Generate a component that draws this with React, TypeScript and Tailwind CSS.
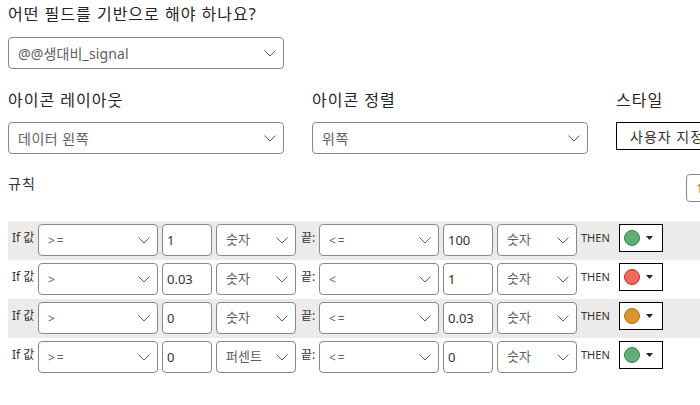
const font = { fontFamily: '"Noto Sans", "Noto Sans CJK KR", sans-serif' };

function Chevron({ className = "" }: { className?: string }) {
  return (
    <svg width="12" height="7" viewBox="0 0 12 7" fill="none" className={className}>
      <path d="M0.5 0.5 L6 6 L11.5 0.5" stroke="#605e5c" strokeWidth="1" />
    </svg>
  );
}

function Select({ value, w, kind = "big" }: { value: string; w: string; kind?: "big" | "mixed" | "unit" | "op" }) {
  const cls =
    kind === "op"
      ? "text-[12px] tracking-[2px] text-[#605e5c] pt-[2px]"
      : kind === "unit"
        ? "text-[13px] text-[#605e5c]"
        : kind === "mixed"
          ? "text-[14px] tracking-[0.15px] text-[#605e5c] pt-[1px]"
          : "text-[14px] tracking-[0.5px] text-[#605e5c] pt-[1px]";
  return (
    <div className={`${w} h-8 shrink-0 flex items-center justify-between pl-[9px] pr-[7px] bg-white border border-[#8a8886] rounded-sm`}>
      <span className={cls}>{value}</span>
      <Chevron />
    </div>
  );
}

function NumInput({ value }: { value: string }) {
  return (
    <div className="w-[50px] h-8 shrink-0 flex items-center px-1 pt-[2px] bg-white border border-[#8a8886] rounded-sm text-[13px] text-[#323130]">
      {value}
    </div>
  );
}

function Rule({ op1, v1, u1, op2, v2, color, edge, shaded }: { op1: string; v1: string; u1: string; op2: string; v2: string; color: string; edge: string; shaded: boolean }) {
  return (
    <div className={`h-[39px] flex items-start pt-[3px] pl-1 ${shaded ? "bg-[#edebe9]" : "bg-white"}`}>
      <span className="w-[26px] shrink-0 text-[12px] leading-[28px] text-[#323130] whitespace-nowrap">If 값</span>
      <div className="flex gap-1 shrink-0">
        <Select value={op1} w="w-[120px]" kind="op" />
        <NumInput value={v1} />
        <Select value={u1} w="w-[80px]" kind="unit" />
      </div>
      <span className="w-[23px] shrink-0 pl-[5px] text-[12px] leading-[28px] text-[#323130] whitespace-nowrap">끝:</span>
      <div className="flex gap-1 shrink-0">
        <Select value={op2} w="w-[120px]" kind="op" />
        <NumInput value={v2} />
        <Select value="숫자" w="w-[80px]" kind="unit" />
      </div>
      <span className="w-[42px] shrink-0 pl-1 text-[11px] leading-[28px] text-[#323130]">THEN</span>
      <div className="w-[44px] h-7 shrink-0 flex items-center pl-1 gap-[6px] bg-white border border-black">
        <span className="w-4 h-4 rounded-full border" style={{ backgroundColor: color, borderColor: edge }} />
        <svg width="7" height="4" viewBox="0 0 7 4"><path d="M0 0 H7 L3.5 4 Z" fill="#252423" /></svg>
      </div>
    </div>
  );
}

const label = "h-[33px] text-[16px] tracking-[1px] leading-[22px] text-[#252423] whitespace-nowrap";

export default function App() {
  return (
    <div style={font} className="w-[700px] h-[405px] overflow-hidden bg-white pl-2">
      <div className="h-[37px] pt-[3px] text-[16px] tracking-[1px] leading-[22px] text-[#252423]">어떤 필드를 기반으로 해야 하나요?</div>
      <Select value="@@생대비_signal" w="w-[276px]" kind="mixed" />
      <div className="flex gap-7 mt-[20px] w-[800px]">
        <div className="w-[276px]">
          <div className={label}>아이콘 레이아웃</div>
          <Select value="데이터 왼쪽" w="w-[276px]" />
        </div>
        <div className="w-[276px]">
          <div className={label}>아이콘 정렬</div>
          <Select value="위쪽" w="w-[276px]" />
        </div>
        <div className="w-[140px]">
          <div className={label}>스타일</div>
          <div className="w-[140px] h-7 flex items-center pl-[13px] border border-black text-[14px] tracking-[1px] text-[#323130] whitespace-nowrap">사용자 지정</div>
        </div>
      </div>
      <div className="flex justify-between items-start mt-5 w-[720px] h-[47px]">
        <span className="text-[14px] tracking-[1px] leading-5 text-[#323130]">규칙</span>
        <div className="w-[42px] h-7 border border-[#8a8886] rounded-sm pl-[9px] text-[13px] leading-[26px] text-[#a8740c]">1</div>
      </div>
      <div className="w-[692px]">
        <Rule shaded op1=">=" v1="1" u1="숫자" op2="<=" v2="100" color="#5fae76" edge="#3c7d50" />
        <Rule shaded={false} op1=">" v1="0.03" u1="숫자" op2="<" v2="1" color="#f4675c" edge="#b3322a" />
        <Rule shaded op1=">" v1="0" u1="숫자" op2="<=" v2="0.03" color="#d9952c" edge="#a87120" />
        <Rule shaded={false} op1=">=" v1="0" u1="퍼센트" op2="<=" v2="0" color="#5fae76" edge="#3c7d50" />
      </div>
    </div>
  );
}
